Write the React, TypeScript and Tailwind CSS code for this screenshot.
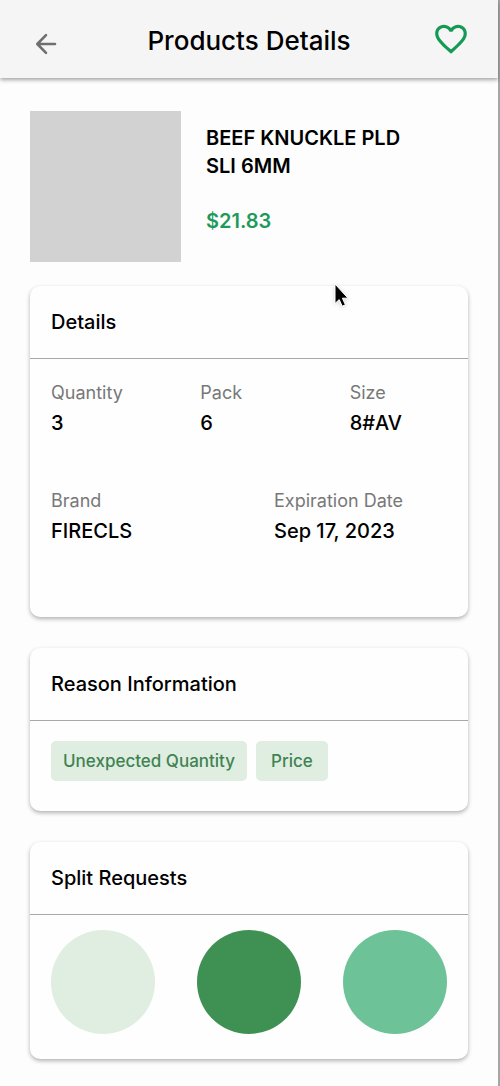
import React from "react";
import { MdFavoriteBorder } from "react-icons/md";

function Card({ title, children }: { title: string; children: React.ReactNode }) {
  return (
    <section className="rounded-[10px] bg-[#fefefe] shadow-[0_2px_4px_rgba(0,0,0,0.3)]">
      <h2 className="border-b border-[#a8a8a8] px-[21px] pt-[22px] pb-[21px] text-xl leading-[29px] font-medium">
        {title}
      </h2>
      {children}
    </section>
  );
}

function Field({ label, value }: { label: string; value: string }) {
  return (
    <div>
      <dt className="text-lg leading-[26px] text-[#787878]">{label}</dt>
      <dd className="text-xl leading-[34px] font-medium">{value}</dd>
    </div>
  );
}

export default function App() {
  return (
    <div className="relative min-h-screen border-r-2 border-[#a6a6a6] bg-[#fdfdfd] font-['Inter','Liberation_Sans',sans-serif] text-black">
      <header className="flex h-[78px] items-center justify-between bg-[#f5f5f5] pr-[28px] pl-[30px] shadow-[0_2px_4px_rgba(0,0,0,0.35)]">
        <button type="button" aria-label="Back" className="mt-2.5 w-9">
          <svg className="h-[30px] w-[30px]" viewBox="0 0 30 30" fill="none" stroke="#6f6f6f" strokeWidth="2.6" strokeLinecap="round" strokeLinejoin="round">
            <path d="M25 15H7.5M16 6.2L7.3 15l8.7 8.8" />
          </svg>
        </button>
        <h1 className="pt-1 text-[26px] leading-8 font-medium">Products Details</h1>
        <button type="button" aria-label="Add to favourites">
          <MdFavoriteBorder size={38} color="#149a55" />
        </button>
      </header>
      <main className="px-[30px] pt-[33px] pb-7">
        <div className="flex gap-[25px]">
          <div className="h-[151px] w-[151px] shrink-0 bg-[#d2d2d2]" />
          <div className="max-w-[220px] pt-[13px]">
            <p className="text-xl leading-7 font-semibold">BEEF KNUCKLE PLD SLI 6MM</p>
            <p className="mt-[27px] text-xl leading-7 font-semibold text-[#1f9a5b]">$21.83</p>
          </div>
        </div>
        <div className="mt-6 flex flex-col gap-[31px]">
          <Card title="Details">
            <dl className="px-[21px] pt-[21px] pb-[69px]">
              <div className="grid grid-cols-3 gap-x-[52px]">
                <Field label="Quantity" value="3" />
                <Field label="Pack" value="6" />
                <Field label="Size" value="8#AV" />
              </div>
              <div className="mt-12 grid grid-cols-2 gap-x-[50px]">
                <Field label="Brand" value="FIRECLS" />
                <Field label="Expiration Date" value="Sep 17, 2023" />
              </div>
            </dl>
          </Card>
          <Card title="Reason Information">
            <ul className="flex gap-[9px] px-[21px] pt-5 pb-[30px]">
              <li className="rounded-[5px] bg-[#dfeee0] px-3 py-2 text-[17px] leading-6 font-medium text-[#3f8354]">Unexpected Quantity</li>
              <li className="rounded-[5px] bg-[#dfeee0] px-[15px] py-2 text-[17px] leading-6 font-medium text-[#3f8354]">Price</li>
            </ul>
          </Card>
          <Card title="Split Requests">
            <div className="flex justify-between px-[21px] pt-[15px] pb-[25px]">
              <div className="h-[104px] w-[104px] rounded-full bg-[#dfeee0]" />
              <div className="h-[104px] w-[104px] rounded-full bg-[#3f9153]" />
              <div className="h-[104px] w-[104px] rounded-full bg-[#6ec298]" />
            </div>
          </Card>
        </div>
      </main>
      <svg className="absolute top-[280px] left-[331px] h-7 w-5 drop-shadow-sm" viewBox="0 0 20 28">
        <path d="M4 4V23.5l4.2-3.9 3 6.6 3.2-1.4-3-6.6h5.6z" fill="#000" stroke="#fff" strokeWidth="1" strokeLinejoin="round" />
      </svg>
    </div>
  );
}
